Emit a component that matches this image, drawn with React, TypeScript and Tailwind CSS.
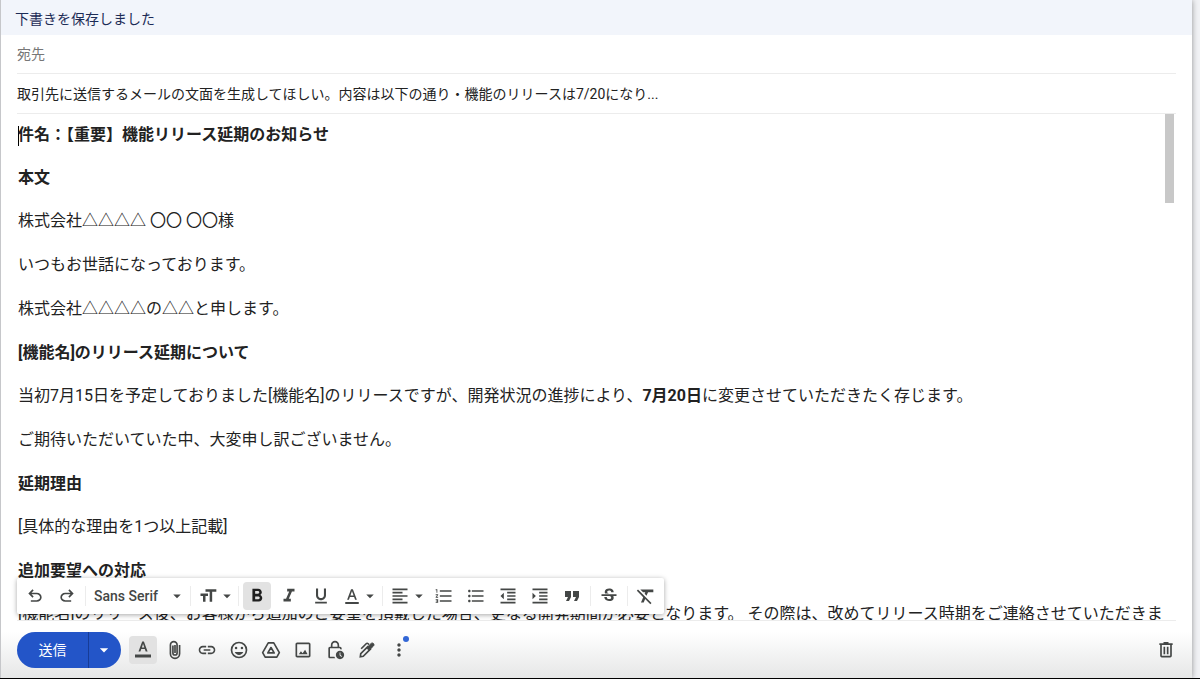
import type { ReactNode } from "react";
import {
  MdArrowDropDown,
  MdFormatAlignLeft,
  MdFormatBold,
  MdFormatClear,
  MdFormatIndentDecrease,
  MdFormatIndentIncrease,
  MdFormatItalic,
  MdFormatListBulleted,
  MdFormatListNumbered,
  MdFormatQuote,
  MdFormatSize,
  MdFormatUnderlined,
  MdLink,
  MdMoreVert,
  MdOutlineLockClock,
  MdStrikethroughS,
} from "react-icons/md";

type Line = { heading?: boolean; content: ReactNode };

const lines: Line[] = [
  { heading: true, content: "件名：【重要】機能リリース延期のお知らせ" },
  { heading: true, content: "本文" },
  { content: "株式会社△△△△ 〇〇 〇〇様" },
  { content: "いつもお世話になっております。" },
  { content: "株式会社△△△△の△△と申します。" },
  { heading: true, content: "[機能名]のリリース延期について" },
  {
    content: (
      <>
        当初7月15日を予定しておりました[機能名]のリリースですが、開発状況の進捗により、
        <b>7月20日</b>に変更させていただきたく存じます。
      </>
    ),
  },
  { content: "ご期待いただいていた中、大変申し訳ございません。" },
  { heading: true, content: "延期理由" },
  { content: "[具体的な理由を1つ以上記載]" },
  { heading: true, content: "追加要望への対応" },
  {
    content:
      "[機能名]のリリース後、お客様から追加のご要望を頂戴した場合、更なる開発期間が必要となります。 その際は、改めてリリース時期をご連絡させていただきま",
  },
];

function Symbol({ d, size = 20 }: { d: string; size?: number }) {
  return (
    <svg viewBox="0 -960 960 960" width={size} height={size} fill="currentColor" aria-hidden="true">
      <path d={d} />
    </svg>
  );
}

function TextColorIcon() {
  return (
    <svg viewBox="0 0 24 24" width={18} height={18} fill="currentColor" aria-hidden="true">
      <path d="M3 20h18v2.500H3zM5.500 17h2.400l1.300-3.600h5.600l1.300 3.600h2.400L13.200 3h-2.500zm4.400-5.600 2-5.800h.1l2.100 5.800z" />
    </svg>
  );
}

function FormattingIcon() {
  return (
    <svg viewBox="0 0 20 20" width={20} height={20} fill="currentColor" aria-hidden="true">
      <path d="M2 14.500h16v3H2zM5.500 11.500h1.900l.9-2.400h3.500l.9 2.400h1.900L10.900 1.500H9.200zM8.900 7.500l1.100-3.400h.1l1.200 3.400z" />
    </svg>
  );
}

function DriveIcon() {
  return (
    <svg
      viewBox="0 0 24 24"
      width={20}
      height={20}
      fill="none"
      stroke="currentColor"
      strokeWidth={2}
      strokeLinejoin="round"
      aria-hidden="true"
    >
      <path d="M8.700 3.500h6.600L22 15.200l-3 5.300H5l-3-5.300z" />
      <path d="M12 9l-3.800 6.500h7.600z" />
    </svg>
  );
}

function PhotoIcon() {
  return (
    <svg viewBox="0 0 24 24" width={20} height={20} fill="currentColor" aria-hidden="true">
      <path d="M19 5v14H5V5h14m0-2H5c-1.100 0-2 .9-2 2v14c0 1.100.9 2 2 2h14c1.100 0 2-.9 2-2V5c0-1.100-.9-2-2-2z" />
      <path d="M7 17l2.500-3.500 2 2.300 3-4L17.500 17z" />
    </svg>
  );
}

function EmojiIcon() {
  return (
    <svg viewBox="0 0 24 24" width={20} height={20} fill="currentColor" aria-hidden="true">
      <circle cx="12" cy="12" r="9" fill="none" stroke="currentColor" strokeWidth="2" />
      <circle cx="8.500" cy="9.500" r="1.500" />
      <circle cx="15.500" cy="9.500" r="1.500" />
      <path d="M12 18c2.300 0 4.200-1.400 5.100-3.500H6.900C7.800 16.600 9.700 18 12 18z" />
    </svg>
  );
}

function ClipIcon() {
  return (
    <svg
      viewBox="0 0 24 24"
      width={20}
      height={20}
      fill="none"
      stroke="currentColor"
      strokeWidth={2}
      aria-hidden="true"
    >
      <path d="M17.500 6v10.500a5.500 5.500 0 0 1-11 0V6a4 4 0 0 1 8 0v9.500a2.500 2.500 0 0 1-5 0V6.500M12 6v9.500" />
    </svg>
  );
}

function PenIcon() {
  return (
    <svg viewBox="0 0 24 24" width={20} height={20} fill="none" stroke="currentColor" aria-hidden="true">
      <path d="M5 10.500 11 4.500c.8-.8 1.600-.8 2.400 0l1 1" strokeWidth="2" />
      <path d="M13 8 4.500 16.500 4 20l3.500-.5L16 11z" strokeWidth="2" />
      <path
        d="M11.500 9.500 16.800 4.200c.9-.9 2.200-.9 3 0s.9 2.100 0 3L14.500 12.500z"
        fill="currentColor"
        strokeWidth="1"
      />
    </svg>
  );
}

function TrashIcon() {
  return (
    <svg
      viewBox="0 0 24 24"
      width={20}
      height={20}
      fill="none"
      stroke="currentColor"
      strokeWidth={2}
      aria-hidden="true"
    >
      <path d="M4 5h16M9 3.500h6M6 5v14c0 .6.400 1 1 1h10c.6 0 1-.4 1-1V5M10 8v9M14 8v9" />
    </svg>
  );
}

const UNDO =
  "M280-200v-80h284q63 0 109.500-40T720-420q0-60-46.500-100T564-560H312l104 104-56 56-200-200 200-200 56 56-104 104h252q97 0 166.500 63T800-420q0 94-69.500 157T564-200H280Z";
const REDO =
  "M396-200q-97 0-166.500-63T160-420q0-94 69.500-157T396-640h252L544-744l56-56 200 200-200 200-56-56 104-104H396q-63 0-109.500 40T240-420q0 60 46.500 100T396-280h284v80H396Z";

function ToolButton({
  label,
  active = false,
  menu = false,
  children,
}: {
  label: string;
  active?: boolean;
  menu?: boolean;
  children: ReactNode;
}) {
  return (
    <button
      type="button"
      aria-label={label}
      className={`relative flex h-7 shrink-0 items-center justify-center rounded-sm ${
        menu ? "w-[39px]" : "w-7"
      } ${active ? "bg-[#e2e2e2]" : ""}`}
    >
      {children}
      {menu && <MdArrowDropDown size={18} className="-mr-1 shrink-0" />}
    </button>
  );
}

function Divider() {
  return <span className="h-5 w-px shrink-0 bg-[#ececec]" />;
}

function FormatToolbar() {
  return (
    <div
      role="toolbar"
      aria-label="書式設定オプション"
      className="absolute bottom-full left-4 mb-1.5 flex h-9 items-center gap-1 rounded-xs bg-white px-1 text-[#444746] shadow-[0_1px_5px_rgba(0,0,0,0.35)]"
    >
      <ToolButton label="元に戻す">
        <Symbol d={UNDO} />
      </ToolButton>
      <ToolButton label="やり直す">
        <Symbol d={REDO} />
      </ToolButton>
      <Divider />
      <label className="relative flex h-7 w-24 items-center">
        <span className="sr-only">フォント</span>
        <select className="w-full appearance-none bg-transparent pl-1 text-sm font-medium outline-none">
          <option>Sans Serif</option>
        </select>
        <MdArrowDropDown size={18} className="pointer-events-none absolute right-0" />
      </label>
      <Divider />
      <ToolButton label="サイズ" menu>
        <MdFormatSize size={20} />
      </ToolButton>
      <Divider />
      <ToolButton label="太字" active>
        <MdFormatBold size={22} className="text-[#1f1f1f]" />
      </ToolButton>
      <ToolButton label="斜体">
        <MdFormatItalic size={22} />
      </ToolButton>
      <ToolButton label="下線">
        <MdFormatUnderlined size={20} />
      </ToolButton>
      <ToolButton label="テキストの色" menu>
        <TextColorIcon />
      </ToolButton>
      <Divider />
      <ToolButton label="配置" menu>
        <MdFormatAlignLeft size={20} />
      </ToolButton>
      <ToolButton label="番号付きリスト">
        <MdFormatListNumbered size={20} />
      </ToolButton>
      <ToolButton label="箇条書き">
        <MdFormatListBulleted size={20} />
      </ToolButton>
      <ToolButton label="インデント減">
        <MdFormatIndentDecrease size={20} />
      </ToolButton>
      <ToolButton label="インデント増">
        <MdFormatIndentIncrease size={20} />
      </ToolButton>
      <ToolButton label="引用">
        <MdFormatQuote size={24} />
      </ToolButton>
      <Divider />
      <ToolButton label="取り消し線">
        <MdStrikethroughS size={20} />
      </ToolButton>
      <Divider />
      <ToolButton label="書式をクリア">
        <MdFormatClear size={22} />
      </ToolButton>
    </div>
  );
}

function ActionBar() {
  return (
    <footer className="relative bg-linear-to-b from-white from-20% to-[#e6e7e7] px-4">
      <FormatToolbar />
      <div className="flex items-center gap-1 border-t border-[#ececec] pt-[11px] pb-2.5 text-[#444746]">
        <div className="mr-1 flex h-9 overflow-hidden rounded-full bg-[#2355c8] text-white">
          <button type="button" className="w-[72px] border-r border-[#173c96] text-sm">
            送信
          </button>
          <button
            type="button"
            aria-label="その他の送信オプション"
            className="flex w-8 items-center justify-center pr-0.5"
          >
            <MdArrowDropDown size={20} />
          </button>
        </div>
        <ToolButton label="書式設定オプション" active>
          <FormattingIcon />
        </ToolButton>
        <ToolButton label="ファイルを添付">
          <ClipIcon />
        </ToolButton>
        <ToolButton label="リンクを挿入">
          <MdLink size={20} />
        </ToolButton>
        <ToolButton label="絵文字を挿入">
          <EmojiIcon />
        </ToolButton>
        <ToolButton label="ドライブを使用してファイルを挿入">
          <DriveIcon />
        </ToolButton>
        <ToolButton label="写真を挿入">
          <PhotoIcon />
        </ToolButton>
        <ToolButton label="情報保護モードを切り替え">
          <MdOutlineLockClock size={20} />
        </ToolButton>
        <ToolButton label="署名を挿入">
          <PenIcon />
        </ToolButton>
        <ToolButton label="その他のオプション">
          <MdMoreVert size={20} />
          <span className="absolute top-0 right-1 size-1.5 rounded-full bg-[#3367d6]" />
        </ToolButton>
        <div className="-mr-1 ml-auto">
          <ToolButton label="下書きを破棄">
            <TrashIcon />
          </ToolButton>
        </div>
      </div>
    </footer>
  );
}

export default function App() {
  return (
    <div
      lang="ja"
      className="flex h-screen overflow-hidden border-b border-black bg-[#f1f2f5] pr-2 font-[Roboto,'Noto_Sans_CJK_JP',sans-serif] text-[#222]"
    >
      <main className="flex min-w-0 flex-1 flex-col border-l border-[#c6c7ca] bg-white shadow-[0_0_6px_rgba(0,0,0,0.4)]">
        <header className="bg-[#f2f5fb] px-3.5 pt-2.5 pb-1.5 text-sm leading-[19px] text-[#1c2b56]">
          下書きを保存しました
        </header>

        <div className="mx-4 border-b border-[#ececec]">
          <input
            aria-label="宛先"
            placeholder="宛先"
            className="block h-[38px] w-full text-sm outline-none placeholder:text-[#777]"
          />
        </div>
        <div className="mx-4 border-b border-[#ececec]">
          <input
            aria-label="件名"
            defaultValue="取引先に送信するメールの文面を生成してほしい。内容は以下の通り・機能のリリースは7/20になり..."
            className="block h-[39px] w-full pb-0.5 text-sm outline-none"
          />
        </div>

        <div className="mx-4 flex min-h-0 flex-1 overflow-hidden">
          <div
            role="textbox"
            aria-label="メッセージ本文"
            aria-multiline="true"
            className="min-w-0 flex-1 pt-[9px] pl-px text-base leading-6 whitespace-nowrap"
          >
            {lines.map((line, i) =>
              line.heading ? (
                <h3 key={i} className="mb-[19px] font-bold">
                  {i === 0 && <span className="-mr-px inline-block h-5 w-px bg-black align-middle" />}
                  {line.content}
                </h3>
              ) : (
                <p key={i} className="mb-5">
                  {line.content}
                </p>
              ),
            )}
          </div>
          <div className="mr-0.5 h-[89px] w-[9px] shrink-0 bg-[#c8c8c8]" />
        </div>

        <ActionBar />
      </main>
    </div>
  );
}
